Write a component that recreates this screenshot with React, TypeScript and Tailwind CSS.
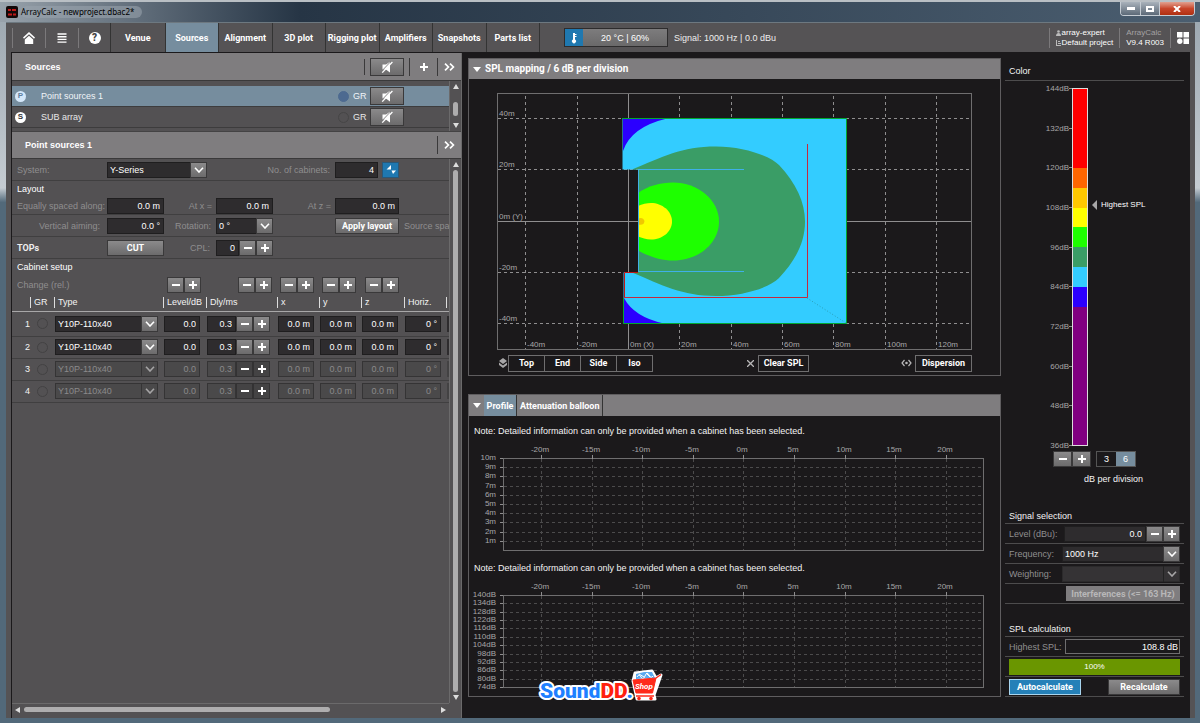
import React from 'react';

const TABS = ['Venue', 'Sources', 'Alignment', '3D plot', 'Rigging plot', 'Amplifiers', 'Snapshots', 'Parts list'];

const CABINETS = [
  { id: 1, enabled: true },
  { id: 2, enabled: true },
  { id: 3, enabled: false },
  { id: 4, enabled: false },
];

const SCALE = ['144dB', '132dB', '120dB', '108dB', '96dB', '84dB', '72dB', '60dB', '48dB', '36dB'];

const BANDS = [
  { color: '#ff0000', units: 4 },
  { color: '#ff6600', units: 1 },
  { color: '#ffc800', units: 1 },
  { color: '#ffff00', units: 1 },
  { color: '#1eff00', units: 1 },
  { color: '#3a9d66', units: 1 },
  { color: '#33ccff', units: 1 },
  { color: '#2b00ff', units: 1 },
  { color: '#800080', units: 7 },
];

const BOLD = "font-['Roboto'] font-bold";
const RAISED = 'border border-[#3a393a] bg-linear-to-b from-[#8b8a8b] to-[#6c6b6c] text-white';
const RAISED_OFF = 'border border-[#333233] bg-[#444344] text-white';

const Chevron = () => (
  <svg viewBox="0 0 10 6" className="h-[6px] w-[10px]" fill="none" stroke="currentColor" strokeWidth="1.6">
    <path d="M1 .8 5 5 9 .8" />
  </svg>
);

const DoubleChevron = () => (
  <svg viewBox="0 0 11 8" className="h-2 w-[11px]" fill="none" stroke="#fff" strokeWidth="1.7">
    <path d="M1 .7 4.4 4 1 7.3M6 .7 9.4 4 6 7.3" />
  </svg>
);

const MuteIcon = () => (
  <svg viewBox="0 0 12 12" className="h-3 w-3">
    <path d="M1.500 3.500h3.500L9 .8v10.600L5.600 9 4.500 8.500h-3z" fill="#fff" />
    <path d="M.5 10.300 10.300 0" stroke="#777677" strokeWidth=".9" />
    <path d="M1.200 11.600 11.400 1" stroke="#fff" strokeWidth="1.300" />
  </svg>
);

const Sign = ({ plus }: { plus?: boolean }) => (
  <svg viewBox="0 0 8 8" className="h-2 w-2" stroke="currentColor" strokeWidth="2">
    <path d={plus ? 'M0 4h8M4 0v8' : 'M0 4h8'} />
  </svg>
);

const Stepper = ({ name, off }: { name: string; off?: boolean }) => (
  <div className="flex">
    <button aria-label={`${name} down`} className={`flex h-4 w-[17px] items-center justify-center ${off ? RAISED_OFF : RAISED}`}>
      <Sign />
    </button>
    <button aria-label={`${name} up`} className={`flex h-4 w-[17px] items-center justify-center ${off ? RAISED_OFF : RAISED}`}>
      <Sign plus />
    </button>
  </div>
);

interface FieldProps {
  id?: string;
  label?: string;
  value: string;
  className?: string;
  off?: boolean;
}

const Field = ({ id, label, value, className = 'w-full', off }: FieldProps) => (
  <input
    id={id}
    aria-label={label}
    defaultValue={value}
    disabled={off}
    className={`block h-4 min-w-0 border px-[3px] text-right ${className} ${
      off ? 'border-[#353435] bg-[#4a494a] text-[#8b8a8b]' : 'border-[#1f1e1f] bg-[#2e2c2e] text-white'
    }`}
  />
);

const Drop = ({ id, label, value, className = 'w-full', off }: FieldProps) => (
  <div className={`relative ${className}`}>
    <select
      id={id}
      aria-label={label}
      disabled={off}
      className={`block h-4 w-full appearance-none border pl-[2px] opacity-100 ${
        off ? 'border-[#353435] bg-[#4a494a] text-[#8b8a8b]' : 'border-[#1f1e1f] bg-[#2e2c2e] text-white'
      }`}
    >
      <option>{value}</option>
    </select>
    <span
      className={`pointer-events-none absolute top-0 right-0 flex h-4 w-[17px] items-center justify-center ${
        off ? 'border border-[#353435] text-[#a5a4a5]' : RAISED
      }`}
    >
      <Chevron />
    </span>
  </div>
);

const TitleBar = () => (
  <header className="flex h-[22px] shrink-0 items-center border-t-2 border-[#b9bfc4] bg-linear-to-r from-[#98a2ab] via-[#263545] via-25% to-[#4b5e70] pl-[6px]">
    <svg viewBox="0 0 12 12" className="h-3 w-3">
      <rect width="12" height="12" rx="2" fill="#120808" />
      <path d="M2 4h3M6 4h4M2 8.500h4M7 8.500h3" stroke="#c01818" strokeWidth="1.800" />
    </svg>
    <h1 className="ml-[3px] rounded-full bg-[#98a2ab]/60 pr-2 font-['Noto_Sans'] text-[8px] text-black">ArrayCalc - newproject.dbac2*</h1>
    <div className="mr-[5px] ml-auto flex h-[14px] self-start overflow-hidden rounded-b border border-t-0 border-[#c5ccd3]">
      <button aria-label="Minimize" className="flex w-5 items-center justify-center border-r border-[#c5ccd3] bg-linear-to-b from-[#a9b2bb] to-[#5d6a78]">
        <span className="h-[3px] w-2 bg-white" />
      </button>
      <button aria-label="Maximize" className="flex w-[19px] items-center justify-center border-r border-[#c5ccd3] bg-linear-to-b from-[#a9b2bb] to-[#5d6a78]">
        <span className="h-[6px] w-2 border-2 border-white" />
      </button>
      <button aria-label="Close" className="flex w-[34px] items-center justify-center bg-linear-to-b from-[#e0a090] via-[#c8452a] to-[#b03010]">
        <svg viewBox="0 0 8 6" className="h-[6px] w-2" stroke="#fff" strokeWidth="2">
          <path d="m1 0 6 6M7 0 1 6" />
        </svg>
      </button>
    </div>
  </header>
);

const Toolbar = () => (
  <nav className="flex h-[30px] shrink-0 items-center border-t border-[#6d7880] bg-[#555355] pl-[6px] text-white">
    <button aria-label="Home" className="flex h-5 w-[33px] items-center justify-center border-l border-[#7b797b]">
      <svg viewBox="0 0 12 12" className="h-3 w-3" fill="#fff">
        <path d="M6 0 0 5.600l1 1.100L6 2.200l5 4.500 1-1.100z" />
        <path d="M6 3.700 1.800 7.400V12h8.400V7.400z" />
      </svg>
    </button>
    <button aria-label="Menu" className="flex h-5 w-[33px] items-center justify-center border-l border-[#7b797b]">
      <svg viewBox="0 0 10 10" className="h-[10px] w-[10px]" stroke="#fff" strokeWidth="1.400">
        <path d="M.5 1h9M.5 3.700h9M.5 6.400h9M.5 9.100h9" />
      </svg>
    </button>
    <button aria-label="Help" className="flex h-5 w-8 items-center justify-center border-l border-[#7b797b]">
      <span className="flex h-3 w-3 items-center justify-center rounded-full bg-white font-['Roboto'] text-[10px] font-black text-[#444]">?</span>
    </button>
    <div className="grid h-full w-[430px] grid-cols-8 border-r border-l border-[#333]">
      {TABS.map((tab) => (
        <button
          key={tab}
          className={`border-l border-[#333] whitespace-nowrap first:border-l-0 ${BOLD} ${tab === 'Sources' ? 'bg-[#768d9e]' : ''}`}
        >
          {tab}
        </button>
      ))}
    </div>
    <button className="ml-6 flex h-[19px] w-[104px] items-stretch border border-[#2d2c2d]">
      <span className="flex w-[18px] items-center justify-center bg-[#1f78b0]">
        <svg viewBox="0 0 6 12" className="h-3 w-[6px]" fill="#fff">
          <path d="M2 1h2v6.500a2 2 0 1 1-2 0z" />
          <path d="M4 2h1.500v1H4zM4 4h1.500v1H4z" />
        </svg>
      </span>
      <span className="flex flex-1 items-center justify-center bg-linear-to-b from-[#7d7c7d] to-[#6a696a]">20 °C | 60%</span>
    </button>
    <span className="ml-[6px] text-[#eee]">Signal: 1000 Hz | 0.0 dBu</span>
    <div className="ml-auto flex h-5 text-[8px] leading-[10px]">
      <div className="border-l border-[#7b797b] px-[6px]">
        <p className="flex items-center gap-px">
          <svg viewBox="0 0 5 6" className="h-[6px] w-[5px]" fill="#bbb">
            <circle cx="2.500" cy="1.500" r="1.300" />
            <path d="M0 6c0-4 5-4 5 0z" />
          </svg>
          array-expert
        </p>
        <p className="flex items-center gap-px">
          <svg viewBox="0 0 5 6" className="h-[6px] w-[5px]" fill="#bbb">
            <path d="M0 0h1v5h4v1H0zM2 1h2v1H2zM2 3h3v1H2z" />
          </svg>
          Default project
        </p>
      </div>
      <div className="border-l border-[#7b797b] px-[6px]">
        <p className="text-[#a3a2a3]">ArrayCalc</p>
        <p>V9.4 R003</p>
      </div>
      <button aria-label="Apps" className="flex w-[25px] items-center border-l border-[#7b797b] pl-[6px]">
        <svg viewBox="0 0 12 12" className="h-3 w-3" fill="#fff">
          <path d="M0 0h5.500v5.500H0zM6.500 0H12v5.500H6.500zM6.500 6.500H12V12H6.500z" />
          <circle cx="2.800" cy="9.200" r="2.700" />
        </svg>
      </button>
    </div>
  </nav>
);

const SourceRow = ({ letter, name, active }: { letter: string; name: string; active?: boolean }) => (
  <li className={`flex h-[21px] items-center border-b border-[#3d3c3d] pl-[3px] ${active ? 'bg-[#768d9e] text-[#f0f4f8]' : 'text-[#e8e8e8]'}`}>
    <span
      className={`flex h-[11px] w-[11px] items-center justify-center rounded-full text-[8px] font-bold ${
        active ? 'bg-[#d5e8fa] text-[#5d7f9f]' : 'bg-white text-[#333]'
      }`}
    >
      {letter}
    </span>
    <span className="ml-[15px] flex-1">{name}</span>
    <span className={`mr-[4px] h-[11px] w-[11px] rounded-full border ${active ? 'border-[#4d6a90] bg-[#4d6a90]' : 'border-[#464546]'}`} />
    <span className="w-[17px]">GR</span>
    <button aria-label={`Mute ${name}`} className={`mr-[45px] flex h-[18px] w-[34px] items-center justify-center ${RAISED}`}>
      <MuteIcon />
    </button>
  </li>
);

const SourceList = () => (
  <section>
    <div className="flex h-7 items-center border-b border-[#3a393a] bg-[#7f7d7f] pl-[13px]">
      <h2 className="flex-1 font-bold text-white">Sources</h2>
      <span className="h-4 w-px bg-[#3a393a]" />
      <button aria-label="Mute all" className={`ml-[5px] flex h-[18px] w-[34px] items-center justify-center ${RAISED}`}>
        <MuteIcon />
      </button>
      <button aria-label="Add source" className="ml-[5px] flex h-[18px] w-7 items-center justify-center border-l border-[#3a393a] text-white">
        <Sign plus />
      </button>
      <button aria-label="Expand sources" className="flex h-[18px] w-6 items-center justify-center border-l border-[#3a393a]">
        <DoubleChevron />
      </button>
    </div>
    <div className="flex h-[51px] border-b border-[#444344]">
      <ul className="flex-1 pt-[5px]">
        <SourceRow letter="P" name="Point sources 1" active />
        <SourceRow letter="S" name="SUB array" />
      </ul>
      <div className="flex w-3 flex-col items-center border-l border-[#6b6a6b] py-[3px]">
        <svg viewBox="0 0 6 5" className="h-[5px] w-[6px]" fill="#ddd"><path d="M3 0 6 5H0z" /></svg>
        <span className="mt-[13px] h-[14px] w-[5px] rounded-sm bg-[#aeadae]" />
        <svg viewBox="0 0 6 5" className="mt-auto h-[5px] w-[6px]" fill="#ddd"><path d="M3 5 6 0H0z" /></svg>
      </div>
    </div>
    <div className="flex h-[27px] items-center border-b border-[#3a393a] bg-[#7f7d7f] pl-[13px]">
      <h2 className="flex-1 font-bold text-white">Point sources 1</h2>
      <button aria-label="Expand point sources" className="flex h-[18px] w-6 items-center justify-center border-l border-[#3a393a]">
        <DoubleChevron />
      </button>
    </div>
  </section>
);

const FORM_ROW = 'grid grid-cols-[90px_57px_52px_57px_62px_64px_1fr] items-center border-b border-[#403f40] pl-[5px] text-[#8f8e8f]';

const LayoutForm = () => (
  <div>
    <div className={`${FORM_ROW} h-[22px]`}>
      <label htmlFor="system">System:</label>
      <Drop id="system" value="Y-Series" className="col-span-2 w-[100px]" />
      <label htmlFor="count" className="col-span-2 pr-[5px] text-right">No. of cabinets:</label>
      <div className="flex justify-between">
        <Field id="count" value="4" className="w-[43px]" />
        <button aria-label="Arrange cabinets" className="flex h-4 w-[17px] items-center justify-center border border-[#2a5878] bg-[#1f78b0]">
          <svg viewBox="0 0 10 10" className="h-[10px] w-[10px]" fill="#fff">
            <path d="M5 0v4.500H.5zM5.500 5.500H10L7 9z" />
          </svg>
        </button>
      </div>
    </div>
    <h3 className="h-4 pl-[5px] leading-[16px] text-white">Layout</h3>
    <div className={`${FORM_ROW} h-[18px]`}>
      <label htmlFor="spacing" className="whitespace-nowrap">Equally spaced along:</label>
      <Field id="spacing" value="0.0 m" />
      <label htmlFor="atx" className="pr-[4px] text-right">At x =</label>
      <Field id="atx" value="0.0 m" />
      <label htmlFor="atz" className="pr-[4px] text-right">At z =</label>
      <Field id="atz" value="0.0 m" />
    </div>
    <div className={`${FORM_ROW} h-[22px]`}>
      <label htmlFor="aiming" className="pr-[7px] text-right">Vertical aiming:</label>
      <Field id="aiming" value="0.0 °" />
      <label htmlFor="rotation" className="pr-[5px] text-right">Rotation:</label>
      <Drop id="rotation" value="0 °" />
      <span />
      <button className={`h-4 ${BOLD} ${RAISED}`}>Apply layout</button>
      <span className="pl-[5px] whitespace-nowrap">Source spa</span>
    </div>
    <div className={`${FORM_ROW} h-[22px]`}>
      <span className={`text-[#eee] ${BOLD}`}>TOPs</span>
      <button className={`h-4 ${BOLD} ${RAISED}`}>CUT</button>
      <label htmlFor="cpl" className="pr-[6px] text-right">CPL:</label>
      <div className="flex">
        <Field id="cpl" value="0" className="w-[23px]" />
        <Stepper name="CPL" />
      </div>
    </div>
    <h3 className="h-4 pl-[5px] leading-[16px] text-white">Cabinet setup</h3>
  </div>
);

const CabinetTable = () => (
  <table className="w-full table-fixed border-collapse">
    <colgroup>
      <col className="w-[18px]" />
      <col className="w-[24px]" />
      <col className="w-[109px]" />
      <col className="w-[43px]" />
      <col className="w-[71px]" />
      <col className="w-[42px]" />
      <col className="w-[42px]" />
      <col className="w-[43px]" />
      <col className="w-[42px]" />
      <col />
    </colgroup>
    <thead>
      <tr className="h-5">
        <td colSpan={3} className="pl-[5px] text-[#8f8e8f]">Change (rel.)</td>
        {['Level', 'Delay', 'x', 'y', 'z'].map((name) => (
          <td key={name}>
            <div className="flex justify-end pr-[5px]">
              <Stepper name={`Change ${name}`} />
            </div>
          </td>
        ))}
        <td colSpan={2} />
      </tr>
      <tr className="h-4 border-b border-[#a8a7a8] text-left text-[#f4f4f4]">
        <td />
        {['GR', 'Type', 'Level/dB', 'Dly/ms', 'x', 'y', 'z', 'Horiz.', ''].map((name, i) => (
          <th key={i} className="font-normal whitespace-nowrap">
            <span className="block h-[11px] border-l border-[#ddd] pl-[3px] leading-[11px]">{name}</span>
          </th>
        ))}
      </tr>
    </thead>
    <tbody>
      {CABINETS.map(({ id, enabled }) => (
        <tr key={id} className="h-[22px] border-b border-[#403f40] first:h-[25px]">
          <td className="text-right text-[#f4f4f4]">{id}</td>
          <td>
            <span className="ml-[7px] block h-[11px] w-[11px] rounded-full border border-[#434243]" />
          </td>
          <td className="pl-px"><Drop label={`Type ${id}`} value="Y10P-110x40" className="w-[103px]" off={!enabled} /></td>
          <td className="pl-px"><Field label={`Level ${id}`} value="0.0" className="w-9" off={!enabled} /></td>
          <td className="pl-px">
            <div className="flex">
              <Field label={`Delay ${id}`} value="0.3" className="w-[29px]" off={!enabled} />
              <Stepper name={`Delay ${id}`} off={!enabled} />
            </div>
          </td>
          {['x', 'y', 'z'].map((axis) => (
            <td key={axis} className="pl-px">
              <Field label={`${axis} ${id}`} value="0.0 m" className="w-9" off={!enabled} />
            </td>
          ))}
          <td className="pl-px"><Field label={`Horizontal ${id}`} value="0 °" className="w-9" off={!enabled} /></td>
          <td><span className={`ml-px block h-4 ${enabled ? 'bg-[#2e2c2e]' : 'bg-[#434243]'}`} /></td>
        </tr>
      ))}
    </tbody>
  </table>
);

const Sidebar = () => (
  <aside className="flex w-[450px] shrink-0 flex-col border-r border-[#6b6a6b] bg-[#535153]">
    <SourceList />
    <div className="flex flex-1">
      <div className="min-w-0 flex-1">
        <LayoutForm />
        <CabinetTable />
      </div>
      <div className="flex w-3 flex-col items-center gap-[3px] border-l border-[#6b6a6b] py-[3px]">
        <svg viewBox="0 0 6 5" className="h-[5px] w-[6px]" fill="#ddd"><path d="M3 0 6 5H0z" /></svg>
        <span className="w-[5px] flex-1 rounded-sm bg-[#aeadae]" />
        <svg viewBox="0 0 6 5" className="h-[5px] w-[6px]" fill="#ddd"><path d="M3 5 6 0H0z" /></svg>
      </div>
    </div>
    <div className="mr-3 mb-[3px] flex h-3 items-center gap-[4px] border-t border-[#6b6a6b] px-[3px]">
      <svg viewBox="0 0 5 6" className="h-[6px] w-[5px]" fill="#ddd"><path d="M0 3 5 0v6z" /></svg>
      <div className="flex-1">
        <span className="block h-[5px] w-[74%] rounded-sm bg-[#aeadae]" />
      </div>
      <svg viewBox="0 0 5 6" className="h-[6px] w-[5px]" fill="#ddd"><path d="M5 3 0 0v6z" /></svg>
    </div>
  </aside>
);

const MAP_X = [
  [525, '-40m'], [577, '-20m'], [628, '0m (X)'], [679, '20m'], [731, '40m'], [782, '60m'], [833, '80m'], [885, '100m'], [936, '120m'],
] as const;
const MAP_Y = [[118, '40m'], [169, '20m'], [221, '0m (Y)'], [272, '-20m'], [323, '-40m']] as const;

const MapPlot = () => (
  <svg viewBox="469 79 531 272" className="block w-full">
    <rect x="497.5" y="93.5" width="474" height="256" fill="none" stroke="#6f6e6f" />
    <g stroke="#8f8e8f" strokeDasharray="3 3">
      {MAP_X.map(([x]) => <path key={x} d={`M${x + 0.5} 96V349`} />)}
      {MAP_Y.map(([y]) => <path key={y} d={`M498 ${y + 0.5}H971`} />)}
    </g>
    <path d="M498 221.5H971M628.5 94V349" stroke="#8f8e8f" />
    <path d="M622.500 118.500H846.500V323.500H623.500V272.500H638V169.500H622.500z" fill="#33ccff" />
    <path d="M623 118.500H667Q631 127 623 151zM624 298Q634 317 664 323.500H624z" fill="#2b00ff" />
    <path d="M632 169.500C662 157 682 146.500 716 146.500C744 146.500 770 156 779 165C796 183 805 202 805 221.500C805 244 794 262 779 278C769 288 743 296 716 296C682 296 662 285 632 272.500H638V169.500z" fill="#3a9d66" />
    <path d="M638 193C648 186 660 182.500 673 182.500C698 182.500 719 200 719 221.500C719 243 699 260.500 673 260.500C660 260.500 648 256 638 250.500z" fill="#1eff00" />
    <path d="M638 206C642 204 647 203 651 203C662 203 672 211 672 221.500C672 232 662 239.500 651 239.500C646 239.500 642 238 638 236.500z" fill="#ffff00" />
    <path d="M638 218.500q5-2 6.500 2.500q-.5 5-6.500 3.500z" fill="#f0c800" />
    <g fill="none">
      <path d="M638.500 170V272M638 169.500H744M638 271.500H744" stroke="#3fb0e8" />
      <path d="M622 118.500H846.500V323.500H623.500V298" stroke="#00a832" />
      <path d="M638 272.500H624.500V298" stroke="#c01818" />
      <path d="M624 297.500H807.500V144" stroke="#c8283c" />
      <path d="M807 298 846 323" stroke="#2a9fb8" strokeDasharray="1 2" />
    </g>
    <g fill="#a8a7a8" className="text-[8px]">
      {MAP_X.map(([x, t]) => <text key={t} x={x + 2} y="347">{t}</text>)}
      {MAP_Y.map(([y, t]) => <text key={t} x="499" y={y - 2}>{t}</text>)}
    </g>
  </svg>
);

const VIEW_BTN = "h-[17px] border border-[#6f6e6f] font-['Roboto'] font-bold text-white";

const MapPanel = () => (
  <section className="border border-[#5f5d5f]">
    <div className="flex h-5 items-center bg-[#7f7d7f] pl-[4px]">
      <svg viewBox="0 0 8 5" className="h-[5px] w-2" fill="#fff"><path d="M0 0h8L4 5z" /></svg>
      <h2 className={`ml-[4px] text-[10px] text-white ${BOLD}`}>SPL mapping / 6 dB per division</h2>
    </div>
    <MapPlot />
    <div className="flex h-6 items-center pr-7 pl-[30px]">
      <svg viewBox="0 0 8 10" className="h-[10px] w-2" fill="#a8a7a8">
        <path d="M4 0 8 3 4 6 0 3zM0 4.500 4 7.500 8 4.500V7L4 10 0 7z" />
      </svg>
      <div className="ml-px flex">
        {['Top', 'End', 'Side', 'Iso'].map((view) => (
          <button key={view} className={`-mr-px w-[37px] ${VIEW_BTN}`}>{view}</button>
        ))}
      </div>
      <div className="ml-auto flex items-center gap-[4px]">
        <svg viewBox="0 0 7 7" className="h-[7px] w-[7px]" stroke="#b8b7b8" strokeWidth="1.300"><path d="M0 0 7 7M7 0 0 7" /></svg>
        <button className={`w-[51px] whitespace-nowrap ${VIEW_BTN}`}>Clear SPL</button>
      </div>
      <div className="ml-[92px] flex items-center gap-[3px]">
        <svg viewBox="0 0 11 8" className="h-2 w-[11px]" fill="none" stroke="#b8b7b8" strokeWidth="1.200">
          <path d="M3.500 1 1 4l2.500 3M7.500 1 10 4 7.500 7" />
          <circle cx="5.500" cy="4" r=".7" />
        </svg>
        <button className={`w-[57px] ${VIEW_BTN}`}>Dispersion</button>
      </div>
    </div>
  </section>
);

const DISTANCES = ['-20m', '-15m', '-10m', '-5m', '0m', '5m', '10m', '15m', '20m'];

const ProfileChart = ({ labels, step }: { labels: string[]; step: number }) => (
  <svg viewBox="469 443 531 113" className="block w-full">
    <g stroke="#4c4b4c" strokeDasharray="3 3">
      {labels.slice(1).map((l, i) => <path key={l} d={`M504 ${Math.round(458 + (i + 1) * step) + 0.5}H983`} />)}
      {DISTANCES.map((l, i) => <path key={l} d={`M${Math.round(541 + i * 50.6) + 0.5} 459V550`} />)}
    </g>
    <rect x="503.5" y="458.500" width="480" height="92" fill="none" stroke="#6f6e6f" />
    <g stroke="#8f8e8f">
      {labels.map((l, i) => <path key={l} d={`M500 ${Math.round(458 + i * step) + 0.5}h3`} />)}
      {DISTANCES.map((l, i) => <path key={l} d={`M${Math.round(541 + i * 50.6) + 0.5} 455v4`} />)}
    </g>
    <g fill="#a8a7a8" className="text-[8px]">
      {labels.map((l, i) => <text key={l} x="496" y={Math.round(460 + i * step)} textAnchor="end">{l}</text>)}
      {DISTANCES.map((l, i) => <text key={l} x={Math.round(540 + i * 50.6)} y="452" textAnchor="middle">{l}</text>)}
    </g>
  </svg>
);

const ProfilePanel = () => (
  <section className="mt-[18px] border border-[#5f5d5f]">
    <div className="flex h-[21px] items-stretch bg-[#7f7d7f] text-white">
      <button aria-label="Collapse" className="flex w-[15px] items-center justify-center">
        <svg viewBox="0 0 8 5" className="h-[5px] w-2" fill="#fff"><path d="M0 0h8L4 5z" /></svg>
      </button>
      <button className={`w-[33px] border-r border-[#333] bg-[#768d9e] ${BOLD}`}>Profile</button>
      <button className={`border-r border-[#333] px-[3px] ${BOLD}`}>Attenuation balloon</button>
    </div>
    <div className="pt-[3px] pb-[3px] text-[#f4f4f4]">
      <p className="h-6 pl-[5px] leading-[24px]">Note: Detailed information can only be provided when a cabinet has been selected.</p>
      <ProfileChart labels={['10m', '9m', '8m', '7m', '6m', '5m', '4m', '3m', '2m', '1m']} step={9.2} />
      <p className="h-6 pl-[5px] leading-[24px]">Note: Detailed information can only be provided when a cabinet has been selected.</p>
      <ProfileChart
        labels={['140dB', '134dB', '128dB', '122dB', '116dB', '110dB', '104dB', '98dB', '92dB', '86dB', '80dB', '74dB']}
        step={8.36}
      />
    </div>
  </section>
);

const ColorScale = () => (
  <div className="flex h-[369px] pt-[3px]">
    <div className="flex h-[366px] w-[67px] flex-col justify-between text-right text-[8px] leading-[9px] text-[#a8a7a8]">
      {SCALE.map((label) => (
        <span key={label} className="flex items-center justify-end">
          {label}
          <i className="h-px w-[3px] bg-[#8f8e8f]" />
        </span>
      ))}
    </div>
    <div className="mt-[4px] flex h-[358px] w-4 flex-col border border-[#ddd]">
      {BANDS.map(({ color, units }) => (
        <span key={color} style={{ backgroundColor: color, flexGrow: units }} />
      ))}
    </div>
    <div className="mt-[115px] flex h-3 items-center gap-[4px] pl-[4px] text-[8px] text-white">
      <svg viewBox="0 0 5 10" className="h-[10px] w-[5px]" fill="#a8a7a8"><path d="M0 5 5 0v10z" /></svg>
      Highest SPL
    </div>
  </div>
);

const SIDE_ROW = 'flex h-5 items-center border-b border-[#4d4c4d] pl-[4px] pr-[4px]';

const RightPanel = () => (
  <aside className="mr-[6px] ml-[4px] w-[179px] shrink-0 text-[#8f8e8f]">
    <h2 className="h-[23px] border-b border-[#4d4c4d] pl-[4px] leading-[27px] text-[#f4f4f4]">Color</h2>
    <ColorScale />
    <div className="mt-px flex pl-12">
      <button aria-label="Scale down" className={`flex h-4 w-[19px] items-center justify-center ${RAISED}`}><Sign /></button>
      <button aria-label="Scale up" className={`flex h-4 w-[19px] items-center justify-center ${RAISED}`}><Sign plus /></button>
      <div className="ml-[5px] flex h-4 border border-[#555]">
        <button className="w-[19px] text-white">3</button>
        <button className="w-[19px] bg-[#768d9e] text-white">6</button>
      </div>
    </div>
    <p className="mt-[6px] pl-[79px] leading-[12px] whitespace-nowrap text-[#f4f4f4]">dB per division</p>

    <h2 className="mt-6 h-[15px] border-b border-[#4d4c4d] pl-[4px] leading-[14px] text-[#f4f4f4]">Signal selection</h2>
    <div className={SIDE_ROW}>
      <label htmlFor="level" className="w-[55px]">Level (dBu):</label>
      <Field id="level" value="0.0" className="flex-1" />
      <Stepper name="Level" />
    </div>
    <div className={SIDE_ROW}>
      <label htmlFor="frequency" className="w-[53px]">Frequency:</label>
      <Drop id="frequency" value="1000 Hz" className="flex-1" />
    </div>
    <div className={SIDE_ROW}>
      <label htmlFor="weighting" className="w-[53px]">Weighting:</label>
      <div className="relative flex-1">
        <select id="weighting" className="block h-4 w-full appearance-none border border-[#2b2a2b] bg-[#353335]" />
        <span className="pointer-events-none absolute top-0 right-0 flex h-4 w-[17px] items-center justify-center border-l border-[#222] text-[#a5a4a5]">
          <Chevron />
        </span>
      </div>
    </div>
    <div className={`${SIDE_ROW} justify-end`}>
      <button disabled className={`h-[15px] w-[114px] bg-[#7f7d7f] whitespace-nowrap text-[#b8b7b8] ${BOLD}`}>Interferences (&lt;= 163 Hz)</button>
    </div>

    <h2 className="mt-[18px] h-[15px] border-b border-[#4d4c4d] pl-[4px] leading-[14px] text-[#f4f4f4]">SPL calculation</h2>
    <div className={SIDE_ROW}>
      <label htmlFor="highest" className="w-14">Highest SPL:</label>
      <input id="highest" readOnly value="108.8 dB" className="h-[15px] min-w-0 flex-1 border border-[#6f6e6f] pr-px text-right text-white" />
    </div>
    <div className={SIDE_ROW}>
      <div role="progressbar" aria-label="Calculation" aria-valuenow={100} className="h-4 flex-1 bg-[#6a9600] text-center text-[8px] leading-[16px] text-white">
        100%
      </div>
    </div>
    <div className={`${SIDE_ROW} justify-between`}>
      <button className={`h-4 w-[72px] border border-[#a8d4ee] bg-[#2580b8] text-white ${BOLD}`}>Autocalculate</button>
      <button className={`h-4 w-[72px] ${BOLD} ${RAISED}`}>Recalculate</button>
    </div>
  </aside>
);

// Shop watermark that sits over the bottom edge of the page
const Watermark = () => (
  <svg viewBox="0 0 126 36" className="pointer-events-none absolute bottom-[18px] left-[45%] h-9 w-[126px] -translate-x-[2px]">
    <g className="font-['Roboto'] text-[21px] font-black" strokeLinejoin="round" paintOrder="stroke" stroke="#fff" strokeWidth="4">
      <text x="2" y="29">
        <tspan fill="#1e80ff">Sound</tspan>
        <tspan fill="#ff2010">DD</tspan>
        <tspan fill="#1e80ff">.</tspan>
      </text>
    </g>
    <path d="M95 12 97 4 114 2 118 9 123 6 116 26 117 30H99z" fill="#fff" stroke="#fff" strokeWidth="3" strokeLinejoin="round" />
    <path d="M98 10v-5l8-2 8 0 3 6z" fill="#5aaaf0" />
    <path d="M99 8q2-4 4 0t4-1 4-1 4 1M101 5l5 3M108 4l4 4" stroke="#fff" fill="none" />
    <path d="M95 11 118 9 114.500 24H98z" fill="#ff2a1a" stroke="#ff2a1a" strokeLinejoin="round" />
    <path d="M118 9 123 5.500M98 27h18" stroke="#ff2a1a" strokeWidth="1.400" />
    <circle cx="101" cy="29.500" r="1.800" fill="#ff2a1a" />
    <circle cx="113" cy="29.500" r="1.800" fill="#ff2a1a" />
    <text x="97" y="20" fill="#fff" className="font-['Roboto'] text-[8px] font-bold italic">Shop</text>
  </svg>
);

const App = () => (
  <div className="relative flex min-h-screen flex-col bg-linear-to-b from-[#9aa5ae] via-[#c5ccd2] via-26% to-[#52697a] to-28% font-['Liberation_Sans',sans-serif] text-[9px] leading-[12px]">
    <TitleBar />
    <div className="mr-[5px] mb-[5px] ml-[6px] flex flex-1 flex-col bg-[#555355]">
      <Toolbar />
      <main className="mr-[5px] ml-[5px] flex flex-1 border-t border-l border-[#1b191b] bg-[#1b191b]">
        <Sidebar />
        <div className="ml-[6px] min-w-0 flex-1 pt-[5px]">
          <MapPanel />
          <ProfilePanel />
        </div>
        <div className="pt-[5px]">
          <RightPanel />
        </div>
      </main>
    </div>
    <Watermark />
  </div>
);

export default App;
